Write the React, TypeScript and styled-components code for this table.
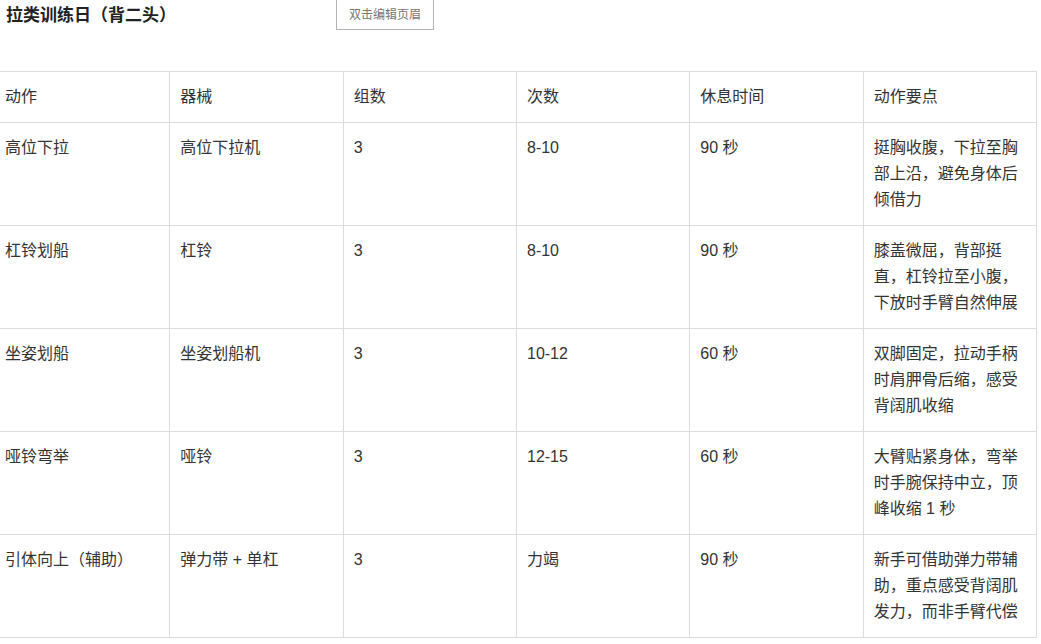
import React from "react";
import styled, { createGlobalStyle } from "styled-components";

const GlobalStyle = createGlobalStyle`
  html, body {
    margin: 0;
    padding: 0;
    background: #ffffff;
    overflow: hidden;
  }
  body {
    font-family: "Liberation Sans", "Noto Sans CJK SC", sans-serif;
    color: #333;
  }
`;

interface Exercise {
  name: string;
  equipment: string;
  sets: string;
  reps: string;
  rest: string;
  tips: string;
}

const columns = ["动作", "器械", "组数", "次数", "休息时间", "动作要点"];

const exercises: Exercise[] = [
  {
    name: "高位下拉",
    equipment: "高位下拉机",
    sets: "3",
    reps: "8-10",
    rest: "90 秒",
    tips: "挺胸收腹，下拉至胸部上沿，避免身体后倾借力",
  },
  {
    name: "杠铃划船",
    equipment: "杠铃",
    sets: "3",
    reps: "8-10",
    rest: "90 秒",
    tips: "膝盖微屈，背部挺直，杠铃拉至小腹，下放时手臂自然伸展",
  },
  {
    name: "坐姿划船",
    equipment: "坐姿划船机",
    sets: "3",
    reps: "10-12",
    rest: "60 秒",
    tips: "双脚固定，拉动手柄时肩胛骨后缩，感受背阔肌收缩",
  },
  {
    name: "哑铃弯举",
    equipment: "哑铃",
    sets: "3",
    reps: "12-15",
    rest: "60 秒",
    tips: "大臂贴紧身体，弯举时手腕保持中立，顶峰收缩 1 秒",
  },
  {
    name: "引体向上（辅助）",
    equipment: "弹力带 + 单杠",
    sets: "3",
    reps: "力竭",
    rest: "90 秒",
    tips: "新手可借助弹力带辅助，重点感受背阔肌发力，而非手臂代偿",
  },
];

const Page = styled.div`
  width: 1041px;
`;

const Header = styled.header`
  display: grid;
  grid-template-columns: 336px auto;
  align-items: start;
  height: 71px;
`;

const Title = styled.h1`
  margin: 3px 0 0 6px;
  font-family: "Noto Sans CJK SC", sans-serif;
  font-size: 17px;
  font-weight: 700;
  line-height: 22px;
  color: #222;
  white-space: nowrap;
`;

const HeaderButton = styled.button`
  width: 98px;
  height: 30px;
  padding: 0 0 3px;
  border: 1px solid #b4b4b4;
  border-top: none;
  background: #fff;
  font-family: "Noto Sans CJK SC", sans-serif;
  font-size: 12px;
  color: #777;
  cursor: pointer;
`;

const Table = styled.table`
  width: 1041px;
  margin-left: -4px;
  border-collapse: collapse;
  table-layout: fixed;
`;

const Cell = styled.td`
  border: 1px solid #dcdcdc;
  padding: 12px 10px;
  vertical-align: top;
  text-align: left;
  font-size: 16px;
  font-weight: 400;
  line-height: 26px;
  color: #333;
  height: 78px;

  &:first-child {
    padding-left: 8px;
  }
`;

const HeadCell = styled(Cell).attrs({ as: "th" })`
  height: 26px;
`;

export default function App() {
  return (
    <Page>
      <GlobalStyle />
      <Header>
        <Title>拉类训练日（背二头）</Title>
        <HeaderButton>双击编辑页眉</HeaderButton>
      </Header>
      <Table>
        <thead>
          <tr>
            {columns.map((c) => (
              <HeadCell key={c}>{c}</HeadCell>
            ))}
          </tr>
        </thead>
        <tbody>
          {exercises.map((e) => (
            <tr key={e.name}>
              <Cell>{e.name}</Cell>
              <Cell>{e.equipment}</Cell>
              <Cell>{e.sets}</Cell>
              <Cell>{e.reps}</Cell>
              <Cell>{e.rest}</Cell>
              <Cell>{e.tips}</Cell>
            </tr>
          ))}
        </tbody>
      </Table>
    </Page>
  );
}
